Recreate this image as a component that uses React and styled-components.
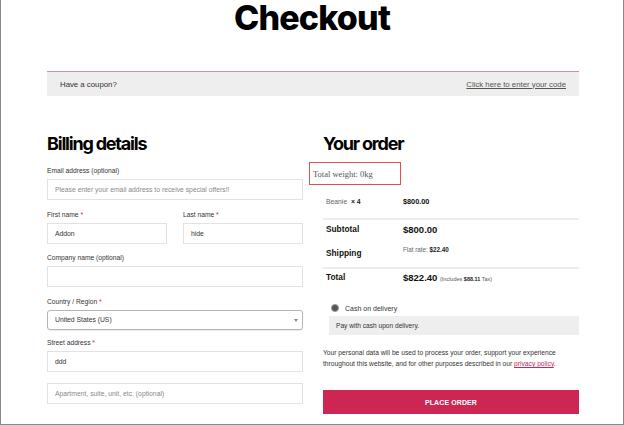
import React from 'react';
import styled, { createGlobalStyle } from 'styled-components';

const GlobalStyle = createGlobalStyle`
  body {
    margin: 0;
    background: #fff;
    font-family: "Liberation Sans", Arial, sans-serif;
    color: #222;
  }
`;

const Frame = styled.div`
  width: 624px;
  height: 425px;
  box-sizing: border-box;
  border: 1px solid #8a8a8a;
  border-top: none;
  overflow: hidden;
`;

const Title = styled.h1`
  margin: 0 0 36px;
  font-family: Inter, "Liberation Sans", sans-serif;
  font-weight: 800;
  font-size: 34px;
  line-height: 35px;
  letter-spacing: -0.8px;
  text-align: center;
  color: #000;
`;

const Wrap = styled.div`
  width: 532px;
  margin-left: 46px;
`;

const CouponBar = styled.div`
  display: flex;
  justify-content: space-between;
  align-items: center;
  height: 25px;
  box-sizing: border-box;
  padding: 0 13px;
  border-top: 1px solid #d98aa0;
  background: #eeeeee;
  font-size: 7.8px;
  color: #333;

  a {
    color: #555;
    text-decoration: underline;
  }
`;

const Columns = styled.div`
  display: grid;
  grid-template-columns: 256px 256px;
  column-gap: 20px;
  margin-top: 37px;
`;

const Heading = styled.h3`
  margin: 0 0 ${p => p.$mb ?? 10}px;
  font-family: Inter, "Liberation Sans", sans-serif;
  font-weight: 700;
  font-size: 18px;
  line-height: 22px;
  letter-spacing: -1.2px;
  color: #000;
`;

const Field = styled.div`
  margin-bottom: ${p => p.$gap ?? 8.5}px;
`;

const Label = styled.label`
  display: block;
  font-size: 6.7px;
  line-height: 12px;
  margin-bottom: 2px;
  color: #333;

  span {
    color: #cd2653;
  }
`;

const Row = styled.div`
  display: grid;
  grid-template-columns: 120px 120px;
  column-gap: 16px;
`;

const Input = styled.div`
  height: ${p => p.$h || 21}px;
  box-sizing: border-box;
  display: flex;
  align-items: center;
  padding: 0 7px;
  border: 1px solid ${p => (p.$select ? '#b5b5b5' : '#e2e2e2')};
  border-radius: ${p => (p.$select ? '3px' : '0')};
  box-shadow: ${p => (p.$select ? '0 1px 1px rgba(0,0,0,0.08)' : 'none')};
  font-size: 6.8px;
  color: ${p => (p.$placeholder ? '#8a8a8a' : '#333')};
  position: relative;
`;

const Caret = styled.span`
  position: absolute;
  right: 4px;
  top: 8px;
  width: 0;
  height: 0;
  border-left: 2px solid transparent;
  border-right: 2px solid transparent;
  border-top: 3px solid #888;
`;

const WeightBox = styled.div`
  width: 92px;
  height: 23px;
  box-sizing: border-box;
  margin: 7px 0 0 -14px;
  padding-left: 3px;
  display: flex;
  align-items: center;
  border: 1.5px solid #e0504d;
  font-family: "Liberation Serif", "Times New Roman", serif;
  font-size: 8.5px;
  color: #555;
`;

const OrderRow = styled.div`
  display: grid;
  grid-template-columns: 77px 1fr;
  align-items: center;
  height: ${p => p.$h}px;
  box-sizing: border-box;
  padding-left: 3px;
  border-bottom: ${p => (p.$line ? '2px solid #ececec' : 'none')};
`;

const Cell = styled.div`
  font-size: ${p => p.$size || 8}px;
  font-weight: ${p => (p.$bold ? 700 : 400)};
  color: ${p => p.$color || '#111'};
  margin-top: ${p => p.$shift || 0}px;

  b {
    font-weight: 700;
    color: #222;
  }
  small {
    font-size: 5.5px;
    font-weight: 400;
    color: #555;
  }
`;

const Radio = styled.div`
  display: flex;
  align-items: center;
  gap: 6px;
  margin: 17px 0 0 8px;
  height: 12px;
  font-size: 7px;
  color: #333;
`;

const Dot = styled.span`
  width: 8px;
  height: 8px;
  box-sizing: border-box;
  border-radius: 50%;
  background: #555;
  border: 1.5px solid #9a9a9a;
`;

const PayBox = styled.div`
  margin: 2px 0 0 6px;
  height: 19px;
  display: flex;
  align-items: center;
  padding-left: 7px;
  background: #eeeeee;
  font-size: 6.6px;
  color: #333;
`;

const Privacy = styled.p`
  margin: 12px 0 0;
  width: 240px;
  font-size: 6.7px;
  line-height: 11px;
  color: #333;

  a {
    color: #cd2653;
    text-decoration: underline;
  }
`;

const PlaceOrder = styled.button`
  display: block;
  width: 100%;
  height: 24px;
  margin-top: 21px;
  border: none;
  background: #cd2653;
  color: #fff;
  font-family: "Liberation Sans", Arial, sans-serif;
  font-weight: 700;
  font-size: 7px;
  letter-spacing: 0.1px;
`;

const App = () => (
  <>
    <GlobalStyle />
    <Frame>
      <Title>Checkout</Title>
      <Wrap>
        <CouponBar>
          <span>Have a coupon?</span>
          <a href="#coupon">Click here to enter your code</a>
        </CouponBar>
        <Columns>
          <div>
            <Heading>Billing details</Heading>
            <Field>
              <Label>Email address (optional)</Label>
              <Input $placeholder>Please enter your email address to receive special offers!!</Input>
            </Field>
            <Row>
              <Field>
                <Label>First name <span>*</span></Label>
                <Input>Addon</Input>
              </Field>
              <Field>
                <Label>Last name <span>*</span></Label>
                <Input>hide</Input>
              </Field>
            </Row>
            <Field>
              <Label>Company name (optional)</Label>
              <Input />
            </Field>
            <Field $gap={7}>
              <Label>Country / Region <span>*</span></Label>
              <Input $select $h={20}>United States (US)<Caret /></Input>
            </Field>
            <Field $gap={11}>
              <Label>Street address <span>*</span></Label>
              <Input>ddd</Input>
            </Field>
            <Input $placeholder>Apartment, suite, unit, etc. (optional)</Input>
          </div>
          <div>
            <Heading $mb={0}>Your order</Heading>
            <WeightBox>Total weight: 0kg</WeightBox>
            <OrderRow $h={35} $line>
              <Cell $size={6.8} $color="#666">Beanie&nbsp;&nbsp;<b>× 4</b></Cell>
              <Cell $size={7.3} $bold>$800.00</Cell>
            </OrderRow>
            <OrderRow $h={18}>
              <Cell $size={8.3} $bold>Subtotal</Cell>
              <Cell $size={9.5} $bold>$800.00</Cell>
            </OrderRow>
            <OrderRow $h={31} $line>
              <Cell $size={8.3} $bold>Shipping</Cell>
              <Cell $size={6.3} $color="#666" $shift={-6}>Flat rate: <b>$22.40</b></Cell>
            </OrderRow>
            <OrderRow $h={16}>
              <Cell $size={8.3} $bold>Total</Cell>
              <Cell $size={9.5} $bold>$822.40 <small>(Includes <b>$88.11</b> Tax)</small></Cell>
            </OrderRow>
            <Radio><Dot />Cash on delivery</Radio>
            <PayBox>Pay with cash upon delivery.</PayBox>
            <Privacy>
              Your personal data will be used to process your order, support your experience
              throughout this website, and for other purposes described in our{' '}
              <a href="#privacy">privacy policy</a>.
            </Privacy>
            <PlaceOrder>PLACE ORDER</PlaceOrder>
          </div>
        </Columns>
      </Wrap>
    </Frame>
  </>
);

export default App;
